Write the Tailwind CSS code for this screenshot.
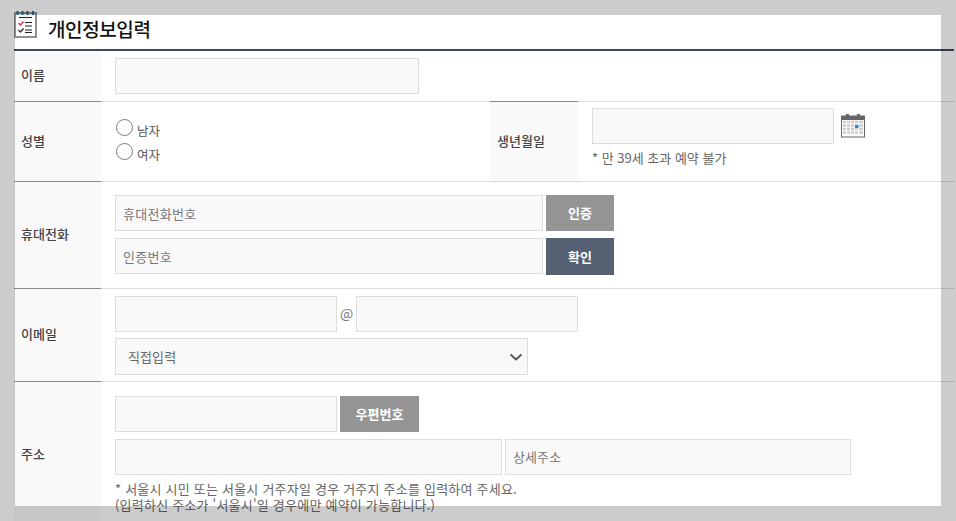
<!DOCTYPE html>
<html lang="ko">
<head>
<meta charset="UTF-8">
<title>개인정보입력</title>
<script src="https://cdn.jsdelivr.net/npm/@tailwindcss/browser@4"></script>
</head>
<body class="relative h-[521px] w-[956px] overflow-hidden bg-white font-['Noto_Sans_CJK_KR','Noto_Sans',sans-serif] text-[13px] text-[#666]">
  <div class="mr-[2px] ml-[14px]">
    <!-- heading -->
    <div class="flex h-[51px] items-start border-b-2 border-[#3f4a5c] pt-[11px]">
      <svg class="h-[27px] w-[23px] shrink-0" viewBox="0 0 23 27" fill="none">
        <rect x="1" y="2" width="21" height="24" fill="#fff" stroke="#8f8f8f" stroke-width="2"/>
        <path d="M3.500 0v4M8.500 0v4M13.500 0v4M19 0v4" stroke="#1f6aa5" stroke-width="2"/>
        <path d="M5 6.500h13M11 11.500h7M11 15h7M11 19h7M11 21.500h7" stroke="#222" stroke-width="1"/>
        <path d="M4.500 12l2 2 3-3.500" stroke="#e5333b" stroke-width="1.400"/>
        <path d="M4.500 19l2 2 3-3.500" stroke="#333" stroke-width="1.400"/>
      </svg>
      <h1 class="mt-[4px] ml-[11px] text-[19px] leading-[28px] font-medium tracking-[-0.4px] text-[#111]">개인정보입력</h1>
    </div>

    <!-- 이름 -->
    <div class="flex h-[51px] border-b border-[#ddd]">
      <div class="flex w-[87px] shrink-0 items-center bg-[#f9f9f9] pb-[2px] pl-[7px] font-medium text-[#444]">이름</div>
      <div class="pt-[7px] pl-[14px]"><div class="h-[36px] w-[304px] border border-[#ddd] bg-[#f9f9f9]"></div></div>
    </div>

    <!-- 성별 / 생년월일 -->
    <div class="flex h-[80px] border-b border-[#ddd]">
      <div class="-mt-px flex w-[87px] shrink-0 items-center border-t border-[#8a8a8a] bg-[#f9f9f9] pb-[2px] pl-[7px] font-medium text-[#444]">성별</div>
      <div class="w-[389px] shrink-0 pt-[13px] pl-[15px]">
        <div class="flex h-[24px] items-center gap-[4px]"><span class="size-[17px] rounded-full border-[1.5px] border-[#777]"></span><span class="mt-[8px] text-[12.5px] text-[#555]">남자</span></div>
        <div class="flex h-[24px] items-center gap-[4px]"><span class="size-[17px] rounded-full border-[1.5px] border-[#777]"></span><span class="mt-[8px] text-[12.5px] text-[#555]">여자</span></div>
      </div>
      <div class="-mt-px flex w-[88px] shrink-0 items-center border-t border-[#8a8a8a] bg-[#f9f9f9] pb-[2px] pl-[7px] font-medium text-[#444]">생년월일</div>
      <div class="pt-[6px] pl-[14px]">
        <div class="flex items-start gap-[7px]">
          <div class="h-[36px] w-[242px] border border-[#ddd] bg-[#f9f9f9]"></div>
          <svg class="mt-[5px] h-[25px] w-[24px]" viewBox="0 0 24 25">
            <rect x="0.5" y="3" width="23" height="21" fill="#fff" stroke="#666"/>
            <rect x="0" y="3" width="24" height="4" fill="#666"/>
            <rect x="5" y="1" width="3" height="3" fill="#666"/>
            <rect x="16" y="1" width="3" height="3" fill="#666"/>
            <path d="M2 9h20M2 12.500h20M2 16h20M2 19.500h20" stroke="#ccc" stroke-width="2.500"/>
            <path d="M5.500 8v13M9.500 8v13M13.500 8v13M17.500 8v13" stroke="#fff" stroke-width="1"/>
            <rect x="14" y="12" width="3.500" height="3" fill="#1e88e5"/>
          </svg>
        </div>
        <p class="mt-[4px] leading-[19px]">* 만 39세 초과 예약 불가</p>
      </div>
    </div>

    <!-- 휴대전화 -->
    <div class="flex h-[107px] border-b border-[#ddd]">
      <div class="-mt-px flex w-[87px] shrink-0 items-center border-t border-[#8a8a8a] bg-[#f9f9f9] pb-[2px] pl-[7px] font-medium text-[#444]">휴대전화</div>
      <div class="flex flex-col gap-[7px] pt-[13px] pl-[14px]">
        <div class="flex gap-[3px]">
          <div class="flex h-[36px] w-[428px] items-center border border-[#ddd] bg-[#f9f9f9] pt-[1px] pl-[7px] tracking-[0.3px] text-[#777]">휴대전화번호</div>
          <button class="h-[36px] w-[68px] bg-[#959595] font-bold text-white">인증</button>
        </div>
        <div class="flex gap-[3px]">
          <div class="flex h-[36px] w-[428px] items-center border border-[#ddd] bg-[#f9f9f9] pt-[1px] pl-[7px] tracking-[0.3px] text-[#777]">인증번호</div>
          <button class="h-[37px] w-[68px] bg-[#556173] font-bold text-white">확인</button>
        </div>
      </div>
    </div>

    <!-- 이메일 -->
    <div class="flex h-[93px] border-b border-[#ddd]">
      <div class="-mt-px flex w-[87px] shrink-0 items-center border-t border-[#8a8a8a] bg-[#f9f9f9] pb-[2px] pl-[7px] font-medium text-[#444]">이메일</div>
      <div class="flex flex-col gap-[6px] pt-[7px] pl-[14px]">
        <div class="flex items-center">
          <div class="h-[36px] w-[222px] border border-[#ddd] bg-[#f9f9f9]"></div>
          <span class="mb-[2px] w-[19px] text-center text-[14px] text-[#777]">@</span>
          <div class="h-[36px] w-[222px] border border-[#ddd] bg-[#f9f9f9]"></div>
        </div>
        <div class="flex h-[37px] w-[413px] items-center justify-between border border-[#ddd] bg-[#f9f9f9] pr-[4px] pl-[12px]">
          <span class="tracking-[0.1px]">직접입력</span>
          <svg class="h-[8px] w-[14px]" viewBox="0 0 14 8" fill="none"><path d="M1.500 1.500 7 6.500l5.500-5" stroke="#555" stroke-width="2"/></svg>
        </div>
      </div>
    </div>

    <!-- 주소 -->
    <div class="flex h-[144px]">
      <div class="-mt-px flex w-[87px] shrink-0 items-center border-t border-[#8a8a8a] bg-[#f9f9f9] pl-[7px] font-medium text-[#444]">주소</div>
      <div class="pt-[14px] pl-[14px]">
        <div class="flex gap-[3px]">
          <div class="h-[36px] w-[222px] border border-[#ddd] bg-[#f9f9f9]"></div>
          <button class="h-[36px] w-[79px] bg-[#959595] font-bold text-white">우편번호</button>
        </div>
        <div class="mt-[7px] flex gap-[3px]">
          <div class="h-[36px] w-[387px] border border-[#ddd] bg-[#f9f9f9]"></div>
          <div class="flex h-[36px] w-[346px] items-center border border-[#ddd] bg-[#f9f9f9] pl-[7px] tracking-[0.1px] text-[#777]">상세주소</div>
        </div>
        <p class="mt-[6px] leading-[16px] tracking-[0.22px]">* 서울시 시민 또는 서울시 거주자일 경우 거주지 주소를 입력하여 주세요.<br>(입력하신 주소가 '서울시'일 경우에만 예약이 가능합니다.)</p>
      </div>
    </div>
  </div>

  <!-- dim frame around the window -->
  <div class="pointer-events-none absolute inset-0 border-t-[15px] border-r-[15px] border-b-[15px] border-l-[15px] border-black/20"></div>
</body>
</html>
